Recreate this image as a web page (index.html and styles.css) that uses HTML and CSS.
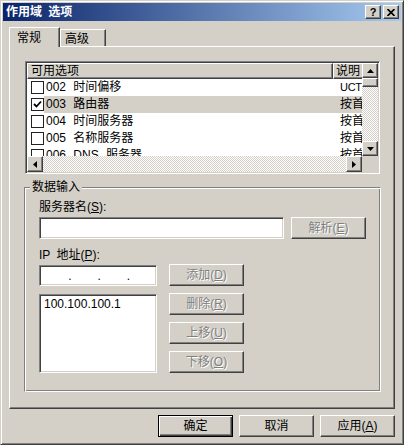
FILE: index.html
```html
<!DOCTYPE html>
<html>
<head>
    <title>作用域 选项</title>
    <link rel="stylesheet" href="styles.css">
</head>
<body>
<div class="window">
    <div class="titlebar">
        <span class="title">作用域 选项</span>
        <span class="caption-btn help">?</span>
        <span class="caption-btn">
            <svg width="8" height="7" viewBox="0 0 8 7"><path d="M0.5 0 L7.5 7 M7.5 0 L0.5 7" stroke="#000" stroke-width="1.7" fill="none"/></svg>
        </span>
    </div>

    <div class="tabs">
        <div class="tab active">常规</div>
        <div class="tab">高级</div>
    </div>

    <div class="panel">
        <div class="listview">
            <div class="lv-body">
                <div class="lv-header">
                    <div class="lv-col col-name">可用选项</div>
                    <div class="lv-col col-desc">说明</div>
                </div>
                <div class="lv-row">
                    <span class="check"></span>
                    <span class="cell-name">002 时间偏移</span>
                    <span class="cell-desc latin">UCT</span>
                </div>
                <div class="lv-row selected">
                    <span class="check">
                        <svg width="11" height="11" viewBox="0 0 11 11"><path d="M2 5 L4.5 7.5 L9 2.5" stroke="#000" stroke-width="1.8" fill="none"/></svg>
                    </span>
                    <span class="cell-name">003 路由器</span>
                    <span class="cell-desc">按首选项</span>
                </div>
                <div class="lv-row">
                    <span class="check"></span>
                    <span class="cell-name">004 时间服务器</span>
                    <span class="cell-desc">按首选项</span>
                </div>
                <div class="lv-row">
                    <span class="check"></span>
                    <span class="cell-name">005 名称服务器</span>
                    <span class="cell-desc">按首选项</span>
                </div>
                <div class="lv-row">
                    <span class="check"></span>
                    <span class="cell-name">006 DNS 服务器</span>
                    <span class="cell-desc">按首选项</span>
                </div>
            </div>

            <div class="vscroll">
                <div class="sb-btn up"><svg width="7" height="4" viewBox="0 0 7 4"><polygon points="3.5,0 7,4 0,4"/></svg></div>
                <div class="sb-thumb-v"></div>
                <div class="sb-track"></div>
                <div class="sb-btn down"><svg width="7" height="4" viewBox="0 0 7 4"><polygon points="0,0 7,0 3.5,4"/></svg></div>
            </div>

            <div class="hscroll">
                <div class="sb-btn left"><svg width="4" height="7" viewBox="0 0 4 7"><polygon points="4,0 4,7 0,3.5"/></svg></div>
                <div class="sb-track"></div>
                <div class="sb-btn right"><svg width="4" height="7" viewBox="0 0 4 7"><polygon points="0,0 0,7 4,3.5"/></svg></div>
            </div>
            <div class="sb-corner"></div>
        </div>

        <div class="group">
            <span class="group-title">数据输入</span>

            <div class="label">服务器名(<u>S</u>):</div>
            <div class="field-row">
                <div class="sunken server-input"></div>
                <div class="btn disabled">解析(<u>E</u>)</div>
            </div>

            <div class="label ip-label">IP 地址(<u>P</u>):</div>
            <div class="ip-area">
                <div class="ip-col">
                    <div class="sunken ip-input">
                        <span class="seg"></span><span class="dot">.</span>
                        <span class="seg"></span><span class="dot">.</span>
                        <span class="seg"></span><span class="dot">.</span>
                        <span class="seg"></span>
                    </div>
                    <div class="sunken ip-list">100.100.100.1</div>
                </div>
                <div class="btn-col">
                    <div class="btn disabled">添加(<u>D</u>)</div>
                    <div class="btn disabled">删除(<u>R</u>)</div>
                    <div class="btn disabled">上移(<u>U</u>)</div>
                    <div class="btn disabled">下移(<u>O</u>)</div>
                </div>
            </div>
        </div>
    </div>

    <div class="footer">
        <div class="btn default">确定</div>
        <div class="btn">取消</div>
        <div class="btn">应用(<u>A</u>)</div>
    </div>
</div>
</body>
</html>
```

FILE: styles.css
```css
body {
    margin: 0;
    font-family: "Liberation Sans", "Noto Sans CJK SC", sans-serif;
    font-size: 12px;
    color: #000;
}

.window {
    width: 404px;
    height: 445px;
    box-sizing: border-box;
    background-color: #d4d0c8;
    border: 1px solid;
    border-color: #d4d0c8 #404040 #404040 #d4d0c8;
    box-shadow: inset 1px 1px #fff, inset -1px -1px #808080;
    padding: 2px;
    display: flex;
    flex-direction: column;
}

/* title bar */
.titlebar {
    height: 18px;
    display: flex;
    align-items: center;
    padding: 0 2px 0 3px;
    background: linear-gradient(to right, #0a246a, #a6caf0);
}

.title {
    flex: 1;
    color: #fff;
    font-weight: bold;
    line-height: 18px;
    word-spacing: 3px;
}

.caption-btn {
    width: 16px;
    height: 14px;
    box-sizing: border-box;
    margin-left: 2px;
    background-color: #d4d0c8;
    border: 1px solid;
    border-color: #fff #404040 #404040 #fff;
    box-shadow: inset -1px -1px #808080;
    display: flex;
    align-items: center;
    justify-content: center;
}

.caption-btn.help {
    font-weight: bold;
    font-size: 11px;
    line-height: 12px;
}

/* tabs */
.tabs {
    display: flex;
    align-items: flex-end;
    height: 19px;
    margin: 6px 0 0 6px;
}

.tab {
    box-sizing: border-box;
    width: 46px;
    height: 17px;
    padding: 2px 0 0 4px;
    line-height: 14px;
    border: 1px solid;
    border-bottom: none;
    border-color: #fff #404040 transparent #fff;
    box-shadow: inset -1px 0 #808080;
}

.tab.active {
    width: 51px;
    height: 20px;
    padding: 3px 0 0 7px;
    margin-bottom: -1px;
    position: relative;
    z-index: 1;
    background-color: #d4d0c8;
}

.panel {
    height: 363px;
    box-sizing: border-box;
    margin: 0 6px;
    padding: 14px 13px 0 14px;
    border: 1px solid;
    border-color: #fff #404040 #404040 #fff;
    box-shadow: inset -1px -1px #808080;
}

/* list view */
.listview {
    height: 113px;
    box-sizing: border-box;
    margin: 0 1px;
    background-color: #fff;
    border: 1px solid;
    border-color: #808080 #fff #fff #808080;
    box-shadow: inset 1px 1px #404040, inset -1px -1px #d4d0c8;
    padding: 1px;
    display: grid;
    grid-template-columns: 335px 16px;
    grid-template-rows: 93px 16px;
}

.lv-body {
    overflow: hidden;
    white-space: nowrap;
}

.lv-header {
    display: flex;
    height: 16px;
}

.lv-col {
    flex: none;
    box-sizing: border-box;
    height: 16px;
    line-height: 14px;
    background-color: #d4d0c8;
    border: 1px solid;
    border-color: #fff #404040 #404040 #fff;
    box-shadow: inset -1px -1px #808080;
}

.col-name {
    width: 306px;
    padding-left: 3px;
}

.col-desc {
    width: 60px;
    padding-left: 2px;
}

.lv-row {
    display: flex;
    align-items: center;
    height: 17px;
}

.check {
    flex: none;
    width: 13px;
    height: 13px;
    box-sizing: border-box;
    margin-left: 4px;
    border: 1px solid #222;
    background-color: #fff;
    display: flex;
    align-items: center;
    justify-content: center;
}

.cell-name,
.cell-desc {
    flex: none;
    height: 17px;
    line-height: 17px;
    overflow: hidden;
}

.cell-name {
    width: 287px;
    padding-left: 2px;
    word-spacing: 4px;
}

.cell-desc {
    width: 52px;
    padding-left: 7px;
}

.cell-desc.latin {
    font-size: 11px;
    letter-spacing: -0.3px;
}

.lv-row.selected .cell-name,
.lv-row.selected .cell-desc {
    background-color: #d4d0c8;
}

/* scroll bars */
.vscroll,
.hscroll {
    display: flex;
    background: repeating-conic-gradient(#d4d0c8 0 25%, #fff 0 50%) 0 0 / 2px 2px;
}

.vscroll {
    flex-direction: column;
}

.sb-track {
    flex: 1;
}

.sb-btn,
.sb-thumb-v {
    flex: none;
    box-sizing: border-box;
    background-color: #d4d0c8;
    border: 1px solid;
    border-color: #fff #404040 #404040 #fff;
    box-shadow: inset -1px -1px #808080;
    display: flex;
    align-items: center;
    justify-content: center;
}

.sb-btn.up,
.sb-btn.down {
    width: 16px;
    height: 15px;
}

.sb-btn.left,
.sb-btn.right {
    width: 16px;
    height: 16px;
}

.sb-thumb-v {
    height: 9px;
}

.sb-corner {
    background-color: #d4d0c8;
}

/* data entry group */
.group {
    position: relative;
    height: 205px;
    box-sizing: border-box;
    margin-top: 13px;
    padding: 12px 14px 0;
    border: 1px solid;
    border-color: #808080 #fff #fff #808080;
    box-shadow: inset 1px 1px #fff, inset -1px -1px #808080;
}

.group-title {
    position: absolute;
    top: -7px;
    left: 5px;
    padding: 0 2px;
    line-height: 13px;
    background-color: #d4d0c8;
}

.label {
    height: 14px;
    line-height: 14px;
}

.ip-label {
    margin-top: 9px;
    word-spacing: 3px;
}

.field-row {
    display: flex;
    gap: 7px;
    margin-top: 3px;
}

.sunken {
    box-sizing: border-box;
    background-color: #fff;
    border: 1px solid;
    border-color: #808080 #fff #fff #808080;
    box-shadow: inset 1px 1px #404040, inset -1px -1px #d4d0c8;
}

.server-input {
    width: 245px;
    height: 22px;
}

.ip-area {
    display: flex;
    gap: 12px;
    margin-top: 2px;
}

.ip-col {
    width: 118px;
    padding-top: 1px;
    display: flex;
    flex-direction: column;
    gap: 8px;
}

.ip-input {
    height: 21px;
    padding-left: 2px;
    display: flex;
    align-items: center;
    line-height: 14px;
}

.seg {
    width: 27px;
}

.dot {
    width: 3px;
    text-align: center;
}

.ip-list {
    height: 79px;
    padding: 2px 4px;
    line-height: 14px;
}

.btn-col {
    display: flex;
    flex-direction: column;
    gap: 7px;
}

/* push buttons */
.btn {
    width: 75px;
    height: 22px;
    box-sizing: border-box;
    background-color: #d4d0c8;
    border: 1px solid;
    border-color: #fff #404040 #404040 #fff;
    box-shadow: inset -1px -1px #808080;
    display: flex;
    align-items: center;
    justify-content: center;
    line-height: 14px;
}

.btn.disabled {
    color: #808080;
    text-shadow: 1px 1px #fff;
}

.btn.default {
    border-color: #000;
    box-shadow: inset 1px 1px #fff, inset -1px -1px #404040, inset -2px -2px #808080;
}

.footer {
    display: flex;
    justify-content: flex-end;
    gap: 6px;
    margin-top: 6px;
    padding-right: 6px;
}
```
